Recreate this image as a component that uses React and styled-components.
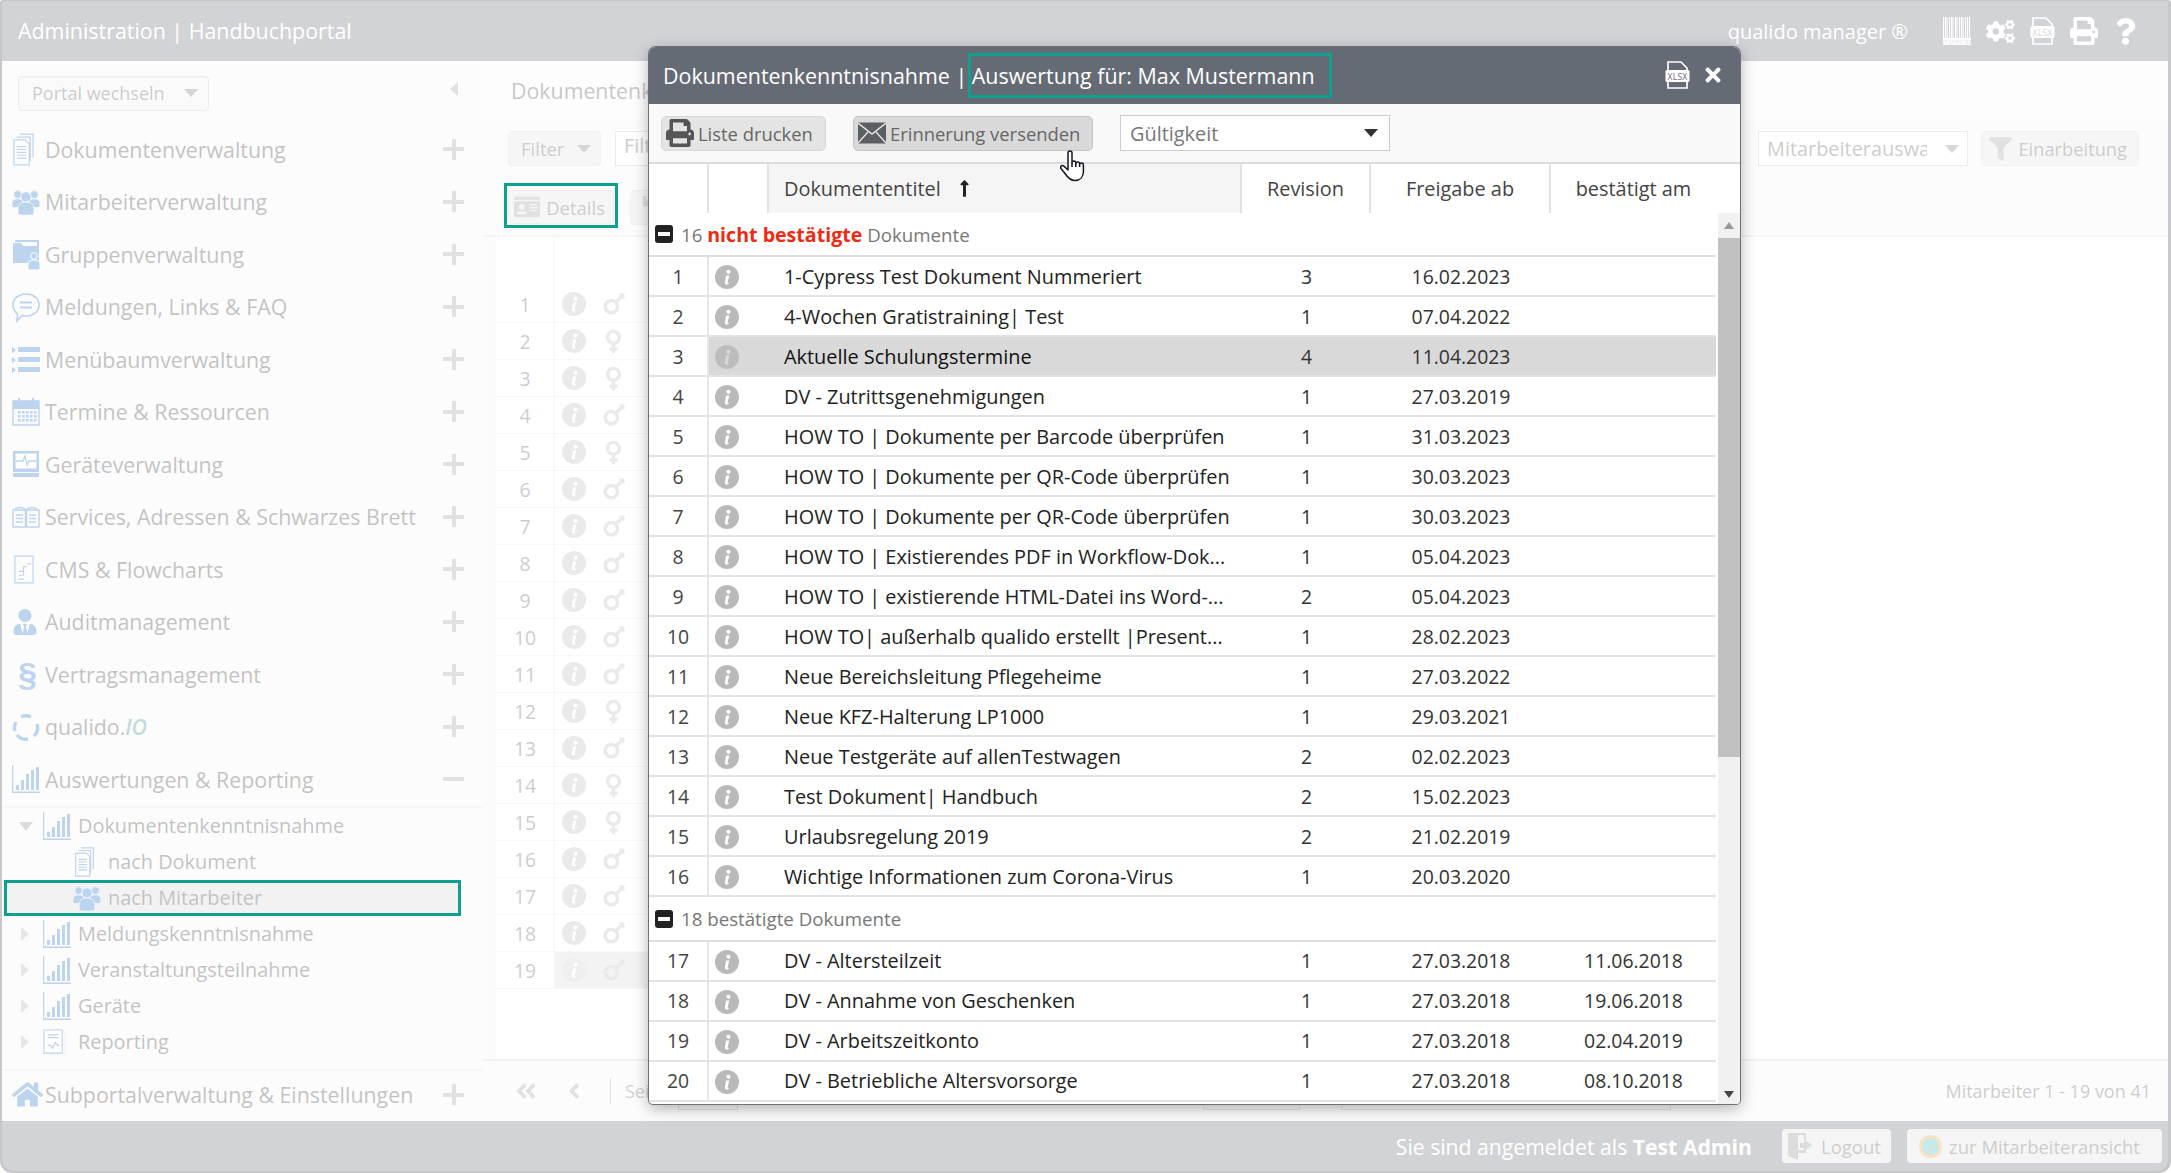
import React from "react";
import styled, { createGlobalStyle } from "styled-components";
import {
  FaUserTie, FaHome, FaCogs, FaPrint, FaQuestion, FaMars, FaVenus,
  FaAngleDoubleLeft, FaAngleLeft, FaFilter, FaUndo, FaIdCard, FaTimes, FaLongArrowAltUp,
} from "react-icons/fa";

const GlobalStyle = createGlobalStyle`
  html, body { margin: 0; padding: 0; background: #fff; }
  body { font-family: "Open Sans", "Noto Sans", sans-serif; }
  *, *::before, *::after { box-sizing: border-box; }
`;

// ---- drawn icons
const DocsIcon = () => (
  <svg viewBox="0 0 24 34" width="23" height="33" fill="none" stroke="currentColor" strokeWidth="1.3">
    <path d="M8 1h14v24M5 4h14v25" />
    <path d="M2 7h12l4 4v22H2z" fill="#fff" />
    <path d="M5 14h10M5 17h10M5 20h10M5 23h10M5 26h10" />
  </svg>
);
const PeopleIcon = ({ size = 28 }) => (
  <svg viewBox="0 0 30 28" width={size} height={size * 0.93} fill="currentColor" stroke="#f5f5f5" strokeWidth="0.800">
    <circle cx="6" cy="6" r="4.300" />
    <circle cx="24" cy="6" r="4.300" />
    <path d="M0 20v-5c0-3 2.500-4.500 6-4.500s6 1.500 6 4.500v5zM18 20v-5c0-3 2.500-4.500 6-4.500s6 1.500 6 4.500v5z" />
    <circle cx="15" cy="8.500" r="5.500" />
    <path d="M6.500 27.500V21c0-5 4-7 8.500-7s8.500 2 8.500 7v6.500c-5 1-12 1-17 0z" />
  </svg>
);
const FolderUserIcon = () => (
  <svg viewBox="0 0 28 34" width="28" height="34" fill="currentColor">
    <path d="M1 6h8l2 3h14v-5h2v22H1z" />
    <path d="M3 3h24v2H3z" />
    <circle cx="22" cy="19" r="3.4" stroke="#fff" strokeWidth="1" />
    <path d="M16 33v-6c0-3 3-4 6-4s6 1 6 4v6z" stroke="#fff" strokeWidth="1" />
  </svg>
);
const ChatIcon = () => (
  <svg viewBox="0 0 28 34" width="28" height="34" fill="none" stroke="currentColor" strokeWidth="1.6">
    <path d="M14 4c7 0 13 4 13 11s-6 11-13 11c-1.500 0-3 0-4-.5L5 31l.5-7C3 22 1 19 1 15 1 8 7 4 14 4z" />
    <path d="M8 12.500h12M8 17.500h12" strokeWidth="2" />
  </svg>
);
const ListIcon = () => (
  <svg viewBox="0 0 28 28" width="28" height="28" fill="currentColor">
    <path d="M0 2l4 3-4 3zM0 12l4 3-4 3zM0 22l4 3-4 3z" />
    <rect x="6" y="2" width="22" height="5" />
    <rect x="6" y="12" width="22" height="5" />
    <rect x="6" y="22" width="22" height="5" />
  </svg>
);
const CalendarIcon = () => (
  <svg viewBox="0 0 28 28" width="28" height="28" fill="currentColor">
    <path d="M1 3h26v24H1z" fill="none" stroke="currentColor" strokeWidth="1.4" />
    <path d="M1 3h26v8H1z" />
    <path d="M6 0h2v6H6zM20 0h2v6h-2z" />
    {[6, 10, 14, 18, 22].map((x) =>
      [13, 17, 21].map((y) => <rect key={x + "-" + y} x={x} y={y} width="2.600" height="2.600" />)
    )}
  </svg>
);
const MonitorIcon = () => (
  <svg viewBox="0 0 28 28" width="28" height="28" fill="currentColor">
    <path d="M1 1h26v21H1z" />
    <path d="M3.500 3.500h21v15h-21z" fill="#fff" />
    <path d="M4 11h7l2-5 2 9 2-4h7" fill="none" stroke="currentColor" strokeWidth="1.300" />
    <path d="M1 23h26v4H1z" />
  </svg>
);
const BookIcon = () => (
  <svg viewBox="0 0 28 22" width="28" height="22" fill="none" stroke="currentColor" strokeWidth="1.4">
    <path d="M1 4h12.500v17H1zM14.500 4H27v17H14.500z" />
    <path d="M4 9h7M4 12.500h7M4 16h7M17 9h7M17 12.500h7M17 16h7" />
    <path d="M3 3c4-2 8-2 11 1 3-3 7-3 11-1" />
  </svg>
);
const FlowIcon = () => (
  <svg viewBox="0 0 24 30" width="23" height="29" fill="none" stroke="currentColor" strokeWidth="1.2">
    <path d="M3 1h19v28H3z" />
    <path d="M7 21h5M7 17h5M7 25h5M12 21v-9h3M16 9h4" />
  </svg>
);
const ChartIcon = ({ size = 28 }) => (
  <svg viewBox="0 0 28 28" width={size} height={size} fill="currentColor">
    <path d="M0 0h1.200v26.500H28V28H0z" />
    <rect x="4" y="20" width="3" height="5" />
    <rect x="9" y="15" width="3" height="10" />
    <rect x="14" y="9" width="3" height="16" />
    <rect x="19" y="5" width="3" height="20" />
    <rect x="24" y="2" width="3" height="23" />
  </svg>
);
const ReportIcon = () => (
  <svg viewBox="0 0 26 28" width="25" height="27" fill="none" stroke="currentColor" strokeWidth="1.2">
    <path d="M4 3h19v24H4z" stroke="#d6d6d6" />
    <path d="M1 1h19v24H1z" fill="#fff" />
    <path d="M5 6h11M5 9h11M5 17h3l2 3 3-6 2 3h2" />
  </svg>
);
const CycleIcon = () => (
  <svg viewBox="0 0 28 28" width="28" height="28" fill="none" stroke="currentColor" strokeWidth="3.400">
    <path d="M9 4a11.500 11.500 0 0 1 10 0M25 11a11.500 11.500 0 0 1-3 12M16 26a11.500 11.500 0 0 1-11-4M3 18a11.500 11.500 0 0 1 1-9" />
  </svg>
);
const XlsxIcon = ({ color = "#fff" }) => (
  <svg viewBox="0 0 25 28" width="25" height="28" fill="none" stroke={color} strokeWidth="1.700">
    <path d="M3 9V1h13l6 6v2M3 21v6h19v-6" />
    <rect x="0.500" y="9" width="24" height="12" rx="1.500" fill={color} stroke="none" />
    <text x="12.500" y="18.500" textAnchor="middle" fontSize="8.500" fill="#656b75" stroke="none" fontFamily="Open Sans" letterSpacing="0.300">XLSX</text>
  </svg>
);
const BarcodeIcon = () => (
  <svg viewBox="0 0 28 28" width="28" height="28" fill="#fff">
    {[0, 2, 3.500, 6, 8, 9.500, 12, 13.500, 16, 18, 19.500, 22, 24, 26].map((x) => (
      <rect key={x} x={x} y="0" width="1.100" height="21" />
    ))}
    <rect x="0" y="21" width="28" height="7" />
    <text x="14" y="27" textAnchor="middle" fontSize="5" fill="#888" fontFamily="Open Sans">0123456789</text>
  </svg>
);
const InfoIcon = ({ color = "#b9b9b9", mark = "#fff" }) => (
  <svg viewBox="0 0 24 24" width="24" height="24">
    <circle cx="12" cy="12" r="12" fill={color} />
    <circle cx="13.500" cy="6.800" r="2.100" fill={mark} />
    <path d="M11 10.500h3.300l-1.800 7.300c0 .6.500.6 1.400.2l-.1.900c-1.700.8-4.100.9-3.900-1.200z" fill={mark} />
  </svg>
);
const MailIcon = () => (
  <svg viewBox="0 0 28 22" width="28" height="22">
    <rect width="28" height="21" y="0.500" fill="#5b5e63" />
    <path d="M0 1l14 11L28 1M0 21l10-11M28 21L18 10" fill="none" stroke="#e6e6e6" strokeWidth="1.400" />
  </svg>
);
const DoorIcon = () => (
  <svg viewBox="0 0 28 28" width="28" height="28" fill="currentColor">
    <path d="M1 1h18v9h-2V3h-6v25L1 24z" />
    <path d="M17 19v-3h-4v-5h4V7l8 6z" />
    <path d="M11 21h8v-3h-8z" />
  </svg>
);
const HandCursor = () => (
  <svg viewBox="0 0 26 32" width="26" height="32" fill="#fff" stroke="#14161c" strokeWidth="1.500" strokeLinejoin="round">
    <path d="M8 19V3a2 2 0 0 1 4 0v10a1.900 1.900 0 0 1 3.800 0v1a1.900 1.900 0 0 1 3.800 0v1a1.900 1.900 0 0 1 3.800 0v6.500C23.400 27 20 30.500 15 30.500c-4 0-7-2.500-10-7l-4-5c-1.200-1.800.8-3.700 2.600-2.600L8 20z" />
    <path d="M12 13v4M15.800 14v3M19.600 15v2" fill="none" />
  </svg>
);

const DocRow = ({ nr, doc, selected }) => (
  <Row>
    <NrCell>{nr}</NrCell>
    <RowRest $selected={selected}>
      <InfoCell>{selected ? <InfoIcon color="#bdbdbd" mark="#d9d9d9" /> : <InfoIcon />}</InfoCell>
      <TitleCell>{doc[0]}</TitleCell>
      <MidCell>{doc[1]}</MidCell>
      <DateCell>{doc[2]}</DateCell>
      <LastCell>{doc[3]}</LastCell>
    </RowRest>
  </Row>
);

export default function App() {
  const menuItems = [
    { label: "Dokumentenverwaltung", icon: <DocsIcon /> },
    { label: "Mitarbeiterverwaltung", icon: <PeopleIcon /> },
    { label: "Gruppenverwaltung", icon: <FolderUserIcon /> },
    { label: "Meldungen, Links & FAQ", icon: <ChatIcon /> },
    { label: "Menübaumverwaltung", icon: <ListIcon /> },
    { label: "Termine & Ressourcen", icon: <CalendarIcon /> },
    { label: "Geräteverwaltung", icon: <MonitorIcon /> },
    { label: "Services, Adressen & Schwarzes Brett", icon: <BookIcon /> },
    { label: "CMS & Flowcharts", icon: <FlowIcon /> },
    { label: "Auditmanagement", icon: <FaUserTie size={26} /> },
    { label: "Vertragsmanagement", icon: <Paragraph>§</Paragraph> },
    { label: <>qualido.<IoMark>IO</IoMark></>, icon: <CycleIcon /> },
  ];

  const treeItems = [
    { label: "Dokumentenkenntnisnahme", open: true, icon: <ChartIcon /> },
    { label: "nach Dokument", sub: true, icon: <DocsIcon /> },
    { label: "nach Mitarbeiter", sub: true, active: true, icon: <PeopleIcon /> },
    { label: "Meldungskenntnisnahme", closed: true, icon: <ChartIcon /> },
    { label: "Veranstaltungsteilnahme", closed: true, icon: <ChartIcon /> },
    { label: "Geräte", closed: true, icon: <ChartIcon /> },
    { label: "Reporting", closed: true, icon: <ReportIcon /> },
  ];

  const genders = "mffmfmmmmmmfmffmmmm".split("");

  const openDocs = [
    ["1-Cypress Test Dokument Nummeriert", 3, "16.02.2023"],
    ["4-Wochen Gratistraining| Test", 1, "07.04.2022"],
    ["Aktuelle Schulungstermine", 4, "11.04.2023"],
    ["DV - Zutrittsgenehmigungen", 1, "27.03.2019"],
    ["HOW TO | Dokumente per Barcode überprüfen", 1, "31.03.2023"],
    ["HOW TO | Dokumente per QR-Code überprüfen", 1, "30.03.2023"],
    ["HOW TO | Dokumente per QR-Code überprüfen", 1, "30.03.2023"],
    ["HOW TO | Existierendes PDF in Workflow-Dok...", 1, "05.04.2023"],
    ["HOW TO | existierende HTML-Datei ins Word-...", 2, "05.04.2023"],
    ["HOW TO| außerhalb qualido erstellt |Present...", 1, "28.02.2023"],
    ["Neue Bereichsleitung Pflegeheime", 1, "27.03.2022"],
    ["Neue KFZ-Halterung LP1000", 1, "29.03.2021"],
    ["Neue Testgeräte auf allenTestwagen", 2, "02.02.2023"],
    ["Test Dokument| Handbuch", 2, "15.02.2023"],
    ["Urlaubsregelung 2019", 2, "21.02.2019"],
    ["Wichtige Informationen zum Corona-Virus", 1, "20.03.2020"],
  ];

  const doneDocs = [
    ["DV - Altersteilzeit", 1, "27.03.2018", "11.06.2018"],
    ["DV - Annahme von Geschenken", 1, "27.03.2018", "19.06.2018"],
    ["DV - Arbeitszeitkonto", 1, "27.03.2018", "02.04.2019"],
    ["DV - Betriebliche Altersvorsorge", 1, "27.03.2018", "08.10.2018"],
  ];

  return (
    <>
      <GlobalStyle />
      <Page>
        <TopBar>
          <TopTitle>Administration | Handbuchportal</TopTitle>
          <TopRight>
            <ProductName>qualido manager ®</ProductName>
            <BarcodeIcon />
            <FaCogs size={29} />
            <XlsxIcon />
            <FaPrint size={28} />
            <HelpSlot><FaQuestion size={27} /></HelpSlot>
          </TopRight>
        </TopBar>

        <Main>
          <Sidebar>
            <PortalRow>
              <PortalSelect>Portal wechseln<Caret $color="#777" /></PortalSelect>
              <CollapseArrow />
            </PortalRow>
            {menuItems.map((m, i) => (
              <MenuItem key={i}>
                <MenuIcon>{m.icon}</MenuIcon>
                <MenuLabel>{m.label}</MenuLabel>
                <PlusSign />
              </MenuItem>
            ))}
            <MenuItem>
              <MenuIcon><ChartIcon /></MenuIcon>
              <MenuLabel>Auswertungen & Reporting</MenuLabel>
              <PlusSign $minus />
            </MenuItem>
            <Tree>
              {treeItems.map((t) => (
                <TreeItem key={t.label} $sub={t.sub} $active={t.active}>
                  {t.open && <TreeOpen />}
                  {t.closed && <TreeClosed />}
                  <TreeIcon>{t.icon}</TreeIcon>
                  <TreeLabel>{t.label}</TreeLabel>
                </TreeItem>
              ))}
            </Tree>
            <SidebarFooter>
              <MenuIcon><FaHome size={31} /></MenuIcon>
              <MenuLabel>Subportalverwaltung & Einstellungen</MenuLabel>
              <PlusSign />
            </SidebarFooter>
          </Sidebar>

          <Content>
            <ContentHead>Dokumentenk</ContentHead>
            <Tools>
              <FilterRow>
                <FilterLeft>
                  <GhostButton $w={93}>Filter<Caret $color="#777" /></GhostButton>
                  <GhostInput>Filter</GhostInput>
                </FilterLeft>
                <FilterRight>
                  <StaffSelect><StaffText>Mitarbeiterauswahl</StaffText><Caret $color="#777" /></StaffSelect>
                  <FunnelButton $w={158}><FaFilter size={28} color="#999" />Einarbeitung</FunnelButton>
                </FilterRight>
              </FilterRow>
              <ActionRow>
                <DetailsButton><FaIdCard size={30} color="#999" />Details</DetailsButton>
                <GhostButton $w={60}><FaUndo size={24} color="#999" /></GhostButton>
              </ActionRow>
            </Tools>
            <BackTable>
              <BackHead><BackNr /><BackRest /></BackHead>
              {genders.map((g, i) => (
                <BackRow key={i}>
                  <BackNr>{i + 1}</BackNr>
                  <BackRest $selected={i === 18}>
                    <InfoIcon color={i === 18 ? "#c9c9c9" : "#b9b9b9"} />
                    {g === "m" ? <FaMars size={28} color="#b9b9b9" /> : <FaVenus size={27} color="#b9b9b9" />}
                  </BackRest>
                </BackRow>
              ))}
            </BackTable>
            <Pager>
              <PagerIcon $ml={31}><FaAngleDoubleLeft size={24} /></PagerIcon>
              <PagerIcon $ml={24}><FaAngleLeft size={24} /></PagerIcon>
              <PagerDivider />
              <PagerLabel>Seite</PagerLabel>
              <PagerBox $w={60} $ml={12} />
              <PagerBox $w={97} $ml={465} />
              <PagerBox $w={330} $ml={41} />
              <PagerCount>Mitarbeiter 1 - 19 von 41</PagerCount>
            </Pager>
          </Content>
        </Main>

        <BottomBar>
          <LoginText>Sie sind angemeldet als <b>Test Admin</b></LoginText>
          <BottomButton $w={109}><DoorIcon />Logout</BottomButton>
          <BottomButton $w={255}><StatusDot />zur Mitarbeiteransicht</BottomButton>
        </BottomBar>

        <Overlay />

        <Modal>
          <ModalHead>
            <ModalTitle>
              Dokumentenkenntnisnahme | <TitleMark>Auswertung für: Max Mustermann</TitleMark>
            </ModalTitle>
            <ModalActions>
              <XlsxIcon />
              <FaTimes size={22} />
            </ModalActions>
          </ModalHead>
          <ModalTools>
            <ToolButton $w={165}><FaPrint size={28} color="#555" />Liste drucken</ToolButton>
            <ToolButton $w={240} $pressed><MailIcon />Erinnerung versenden</ToolButton>
            <ValidSelect>Gültigkeit<Caret $color="#333" /></ValidSelect>
          </ModalTools>
          <HeadRow>
            <HeadCell $line />
            <HeadCell $line />
            <HeadCell $line $sorted>Dokumententitel<SortArrow><FaLongArrowAltUp size={19} /></SortArrow></HeadCell>
            <HeadCell $line $center>Revision</HeadCell>
            <HeadCell $line $center>Freigabe ab</HeadCell>
            <HeadCell $center>bestätigt am</HeadCell>
          </HeadRow>
          <ModalBody>
            <RowList>
              <GroupRow>
                <GroupToggle />
                <span>16 <Alert>nicht bestätigte</Alert> Dokumente</span>
              </GroupRow>
              {openDocs.map((d, i) => (
                <DocRow key={i} nr={i + 1} doc={d} selected={i === 2} />
              ))}
              <GroupRow $tall>
                <GroupToggle />
                <span>18 bestätigte Dokumente</span>
              </GroupRow>
              {doneDocs.map((d, i) => (
                <DocRow key={i} nr={i + 17} doc={d} />
              ))}
            </RowList>
            <ScrollTrack>
              <ScrollArrow />
              <ScrollThumb />
              <ScrollArrow $down />
            </ScrollTrack>
          </ModalBody>
        </Modal>

        <PointerSlot><HandCursor /></PointerSlot>
      </Page>
    </>
  );
}

const Page = styled.div`
  position: relative;
  height: 1173px;
  overflow: hidden;
  display: flex;
  flex-direction: column;
  border-style: solid;
  border-color: #c7c8cb;
  border-width: 1px 3px 2px 2px;
  border-radius: 3px 3px 12px 12px;
  color: #333;
`;

const Overlay = styled.div`
  position: absolute;
  inset: 0;
  z-index: 10;
  background: rgba(255, 255, 255, 0.7);
`;

const TopBar = styled.header`
  flex: 0 0 60px;
  background: #656b75;
  color: #fff;
  display: flex;
  align-items: center;
  justify-content: space-between;
  padding: 0 29px 0 16px;
`;

const TopTitle = styled.div`
  font-size: 21.400px;
  padding-bottom: 2px;
`;

const TopRight = styled.div`
  display: flex;
  align-items: center;
  gap: 15px;
`;

const ProductName = styled.div`
  font-size: 20px;
  margin-right: 20px;
`;

const HelpSlot = styled.span`
  display: flex;
  margin-left: -1px;
`;

const Main = styled.div`
  flex: 1;
  display: flex;
  min-height: 0;
`;

const Sidebar = styled.aside`
  flex: 0 0 481px;
  display: flex;
  flex-direction: column;
  background: #f5f5f5;
`;

const PortalRow = styled.div`
  flex: 0 0 62px;
  display: flex;
  align-items: flex-start;
  justify-content: space-between;
  padding: 15px 25px 0 16px;
`;

const PortalSelect = styled.div`
  width: 191px;
  height: 35px;
  border: 1px solid #bbb;
  border-radius: 4px;
  background: #eee;
  display: flex;
  align-items: center;
  justify-content: space-between;
  padding: 0 10px 2px 13px;
  font-size: 18px;
  color: #555;
`;

const Caret = styled.span`
  width: 0;
  height: 0;
  border-style: solid;
  border-width: 8px 7px 0 7px;
  border-color: ${(p) => p.$color} transparent transparent transparent;
`;

const CollapseArrow = styled.span`
  margin-top: 6px;
  width: 0;
  height: 0;
  border-style: solid;
  border-width: 7px 8px 7px 0;
  border-color: transparent #999 transparent transparent;
`;

const MenuItem = styled.div`
  flex: 0 0 52.500px;
  display: flex;
  align-items: center;
  padding: 0 19px 0 10px;
`;

const SidebarFooter = styled(MenuItem)`
  flex: 0 0 52px;
  border-top: 2px solid #e2e2e2;
  padding-bottom: 3px;
`;

const MenuIcon = styled.span`
  flex: 0 0 33px;
  width: 33px;
  display: flex;
  align-items: center;
  justify-content: flex-start;
  color: #236fc6;
`;

const MenuLabel = styled.span`
  flex: 1;
  font-size: 21.350px;
  white-space: nowrap;
  color: #333;
`;

const IoMark = styled.i`
  color: #26867f;
  font-weight: 600;
`;

const Paragraph = styled.b`
  font-size: 34px;
  line-height: 1;
  margin-left: 6px;
  font-family: "Liberation Sans", sans-serif;
`;

const PlusSign = styled.span`
  position: relative;
  flex: 0 0 21px;
  height: 21px;
  &::before {
    content: "";
    position: absolute;
    left: 0;
    right: 0;
    top: 8.500px;
    height: 4px;
    background: #9b9b9b;
  }
  &::after {
    content: "";
    display: ${(p) => (p.$minus ? "none" : "block")};
    position: absolute;
    top: 0;
    bottom: 0;
    left: 8.500px;
    width: 4px;
    background: #9b9b9b;
  }
`;

const Tree = styled.div`
  flex: 1;
  border-top: 2px solid #e2e2e2;
  margin-top: 0.500px;
`;

const TreeItem = styled.div`
  position: relative;
  height: 36px;
  display: flex;
  align-items: center;
  margin: ${(p) => (p.$active ? "0 22px 0 2px" : "0")};
  padding-left: ${(p) => (p.$active ? "69px" : p.$sub ? "71px" : "41px")};
  background: ${(p) => (p.$active ? "#d4d4d4" : "transparent")};
  ${(p) =>
    p.$active &&
    `&::after {
      content: "";
      position: absolute;
      z-index: 20;
      inset: 0;
      border: 3px solid #0da08c;
    }`}
`;

const TreeOpen = styled.span`
  position: absolute;
  left: 17px;
  top: 14px;
  width: 0;
  height: 0;
  border-style: solid;
  border-width: 9px 7px 0 7px;
  border-color: #888 transparent transparent transparent;
`;

const TreeClosed = styled.span`
  position: absolute;
  left: 19px;
  top: 11px;
  width: 0;
  height: 0;
  border-style: solid;
  border-width: 7px 0 7px 8px;
  border-color: transparent transparent transparent #aaa;
`;

const TreeIcon = styled.span`
  flex: 0 0 35px;
  display: flex;
  align-items: center;
  color: #236fc6;
  & > svg {
    max-height: 30px;
  }
`;

const TreeLabel = styled.span`
  font-size: 19.900px;
  padding-bottom: 2px;
  color: #333;
`;

const Content = styled.main`
  flex: 1;
  min-width: 0;
  display: flex;
  flex-direction: column;
  padding-left: 13px;
  background: #f0f0f0;
`;

const ContentHead = styled.div`
  flex: 0 0 57px;
  margin-left: -13px;
  padding: 15px 0 0 28px;
  background: #f7f7f7;
  font-size: 21.350px;
  color: #444;
  white-space: nowrap;
`;

const Tools = styled.div`
  flex: 0 0 119px;
  margin-left: -13px;
  padding-left: 25px;
  background: #f5f5f5;
  border-bottom: 2px solid #dcdcdc;
`;

const FilterRow = styled.div`
  display: flex;
  justify-content: space-between;
  padding: 13px 29px 0 0;
`;

const FilterLeft = styled.div`
  display: flex;
  gap: 14px;
`;

const FilterRight = styled.div`
  display: flex;
  gap: 13px;
`;

const GhostButton = styled.div`
  width: ${(p) => p.$w}px;
  height: 35px;
  border: 1px solid #ccc;
  border-radius: 4px;
  background: #e0e0e0;
  color: #555;
  font-size: 18.500px;
  display: flex;
  align-items: center;
  justify-content: space-between;
  padding: 0 9px 0 12px;
  gap: 6px;
`;

const FunnelButton = styled(GhostButton)`
  font-size: 18.300px;
  padding: 0 11px 0 7px;
`;

const GhostInput = styled.div`
  width: 240px;
  height: 35px;
  border: 1px solid #bbb;
  background: #fff;
  color: #555;
  font-size: 19.900px;
  padding: 0 8px;
`;

const StaffSelect = styled(GhostInput)`
  width: 210px;
  display: flex;
  align-items: center;
  justify-content: space-between;
`;

const StaffText = styled.span`
  width: 160px;
  overflow: hidden;
  white-space: nowrap;
`;

const ActionRow = styled.div`
  display: flex;
  gap: 16px;
  margin-top: 24px;
`;

const DetailsButton = styled(GhostButton)`
  position: relative;
  width: 106px;
  height: 34px;
  padding: 0 8px 0 5px;
  &::after {
    content: "";
    position: absolute;
    z-index: 20;
    top: -8px;
    bottom: -5px;
    left: -5px;
    right: -5px;
    border: 3px solid #0da08c;
  }
`;

const BackTable = styled.div`
  flex: 1;
  background: #fff;
  margin-right: -13px;
  padding-right: 0;
`;

const BackHead = styled.div`
  height: 49px;
  display: flex;
`;

const BackRow = styled.div`
  height: 37px;
  width: 1000px;
  display: flex;
  border-bottom: 1px solid #e6e6e6;
`;

const BackNr = styled.div`
  flex: 0 0 59px;
  display: flex;
  align-items: center;
  justify-content: center;
  font-size: 19.400px;
  color: #555;
  border-right: 1px solid #e2e2e2;
`;

const BackRest = styled.div`
  flex: 1;
  display: flex;
  align-items: center;
  gap: 14px;
  padding-left: 7px;
  background: ${(p) => (p.$selected ? "#d7d7d7" : "transparent")};
`;

const Pager = styled.div`
  flex: 0 0 62px;
  margin-left: -13px;
  margin-right: 0;
  border-top: 2px solid #d6d6d6;
  background: #f5f5f5;
  display: flex;
  align-items: center;
  padding-right: 17px;
  position: relative;
`;

const PagerIcon = styled.span`
  display: flex;
  margin-left: ${(p) => p.$ml}px;
  color: #999;
`;

const PagerDivider = styled.span`
  width: 1px;
  height: 26px;
  margin-left: 24px;
  background: #999;
`;

const PagerLabel = styled.span`
  margin-left: 14px;
  font-size: 18px;
  color: #666;
`;

const PagerBox = styled.span`
  height: 36px;
  flex: 0 0 ${(p) => p.$w}px;
  margin-left: ${(p) => p.$ml}px;
  margin-top: 1px;
  border: 1px solid #aaa;
  background: #eee;
`;

const PagerCount = styled.span`
  margin-left: auto;
  font-size: 18px;
  color: #555;
`;

const BottomBar = styled.footer`
  flex: 0 0 50px;
  background: #656b75;
  display: flex;
  align-items: center;
  justify-content: flex-end;
  padding: 0 6px 0 0;
  gap: 16px;
`;

const LoginText = styled.div`
  color: #fff;
  font-size: 21.200px;
  margin-right: 14px;
`;

const BottomButton = styled.div`
  flex: 0 0 ${(p) => p.$w}px;
  height: 34px;
  border-radius: 4px;
  background: #dcdcdc;
  color: #555;
  font-size: 18.500px;
  display: flex;
  align-items: center;
  gap: 6px;
  padding: 0 5px;
  & svg {
    color: #8a8a8a;
  }
`;

const StatusDot = styled.span`
  width: 23px;
  height: 23px;
  margin-left: 7px;
  margin-right: 1px;
  border-radius: 50%;
  background: #44b5b5;
  border: 3px solid #ee9d3f;
`;

const Modal = styled.section`
  position: absolute;
  z-index: 30;
  left: 647px;
  top: 46px;
  width: 1091px;
  height: 1057px;
  background: #fff;
  border-radius: 7px 7px 4px 4px;
  overflow: hidden;
  display: flex;
  flex-direction: column;
  box-shadow: 0 0 0 1px #6b7079, 0 4px 16px rgba(0, 0, 0, 0.32);
`;

const ModalHead = styled.div`
  flex: 0 0 57px;
  background: #656b75;
  color: #fff;
  display: flex;
  align-items: center;
  justify-content: space-between;
  padding: 0 16px 1px 14px;
`;

const ModalTitle = styled.div`
  font-size: 21.450px;
  font-weight: 500;
  white-space: nowrap;
`;

const TitleMark = styled.span`
  position: relative;
  margin-left: -1px;
  &::after {
    content: "";
    position: absolute;
    top: -8px;
    bottom: -8px;
    left: -4px;
    right: -17px;
    border: 3px solid #0da08c;
  }
`;

const ModalActions = styled.div`
  display: flex;
  align-items: center;
  gap: 12px;
`;

const ModalTools = styled.div`
  flex: 0 0 60px;
  background: #f9f9f9;
  border-bottom: 2px solid #dcdcdc;
  display: flex;
  align-items: center;
  padding: 0 0 0 12px;
`;

const ToolButton = styled.div`
  flex: 0 0 ${(p) => p.$w}px;
  height: 35px;
  padding: 0 0 0 4px;
  margin-right: 27px;
  display: flex;
  align-items: center;
  gap: 4px;
  border-radius: 5px;
  border: 1px solid ${(p) => (p.$pressed ? "#c4c4c4" : "#d8d8d8")};
  background: ${(p) => (p.$pressed ? "#d9d9d9" : "#e4e4e4")};
  color: #666;
  font-size: 18.400px;
  white-space: nowrap;
`;

const ValidSelect = styled.div`
  width: 270px;
  height: 36px;
  border: 1px solid #ccc;
  background: #fff;
  display: flex;
  align-items: center;
  justify-content: space-between;
  padding: 0 11px 0 9px;
  font-size: 19.900px;
  color: #777;
`;

const gridColumns = "60px 60px 473px 129px 180px 1fr";

const HeadRow = styled.div`
  flex: 0 0 49px;
  display: grid;
  grid-template-columns: ${gridColumns};
  padding-right: 24px;
`;

const HeadCell = styled.div`
  display: flex;
  align-items: center;
  justify-content: ${(p) => (p.$center ? "center" : "flex-start")};
  padding-left: ${(p) => (p.$center ? "0" : "15px")};
  font-size: 19.900px;
  color: #444;
  border-right: ${(p) => (p.$line ? "2px solid #e2e2e2" : "none")};
  background: ${(p) => (p.$sorted ? "#f5f5f5" : "transparent")};
`;

const SortArrow = styled.span`
  display: flex;
  margin-left: 14px;
  color: #222;
`;

const ModalBody = styled.div`
  flex: 1;
  min-height: 0;
  display: flex;
`;

const RowList = styled.div`
  flex: 1;
  min-width: 0;
  overflow: hidden;
  padding-right: 2px;
`;

const GroupRow = styled.div`
  height: ${(p) => (p.$tall ? "44.500px" : "44px")};
  padding-top: ${(p) => (p.$tall ? "1px" : "0")};
  display: flex;
  align-items: center;
  gap: 6px;
  padding-left: 6px;
  border-bottom: 2px solid #dfdfdf;
  font-size: 18.700px;
  color: #777;
  white-space: pre;
`;

const GroupToggle = styled.span`
  position: relative;
  width: 18px;
  height: 18px;
  margin-right: 2px;
  border-radius: 3px;
  background: #222;
  &::after {
    content: "";
    position: absolute;
    left: 3px;
    right: 3px;
    top: 7px;
    height: 4px;
    background: #fff;
  }
`;

const Alert = styled.b`
  color: #ee2b12;
  font-weight: 700;
  font-size: 19.600px;
`;

const Row = styled.div`
  height: 40px;
  display: grid;
  grid-template-columns: 60px 1fr;
  border-bottom: 2px solid #e3e3e3;
  font-size: 19.400px;
  color: #222;
`;

const NrCell = styled.div`
  display: flex;
  align-items: center;
  justify-content: center;
  border-right: 2px solid #e6e6e6;
  color: #444;
`;

const RowRest = styled.div`
  display: grid;
  grid-template-columns: 60px 473px 129px 180px 1fr;
  background: ${(p) => (p.$selected ? "#d9d9d9" : "transparent")};
  color: ${(p) => (p.$selected ? "#111" : "inherit")};
`;

const InfoCell = styled.div`
  display: flex;
  align-items: center;
  padding-left: 6px;
  padding-top: 2px;
`;

const TitleCell = styled.div`
  display: flex;
  align-items: center;
  padding-left: 15px;
  font-size: 19.900px;
  white-space: nowrap;
`;

const MidCell = styled.div`
  display: flex;
  align-items: center;
  justify-content: center;
  color: #333;
`;

const DateCell = styled(MidCell)``;
const LastCell = styled(MidCell)``;

const ScrollTrack = styled.div`
  flex: 0 0 22px;
  background: #f1f1f1;
  display: flex;
  flex-direction: column;
`;

const ScrollArrow = styled.div`
  flex: 0 0 ${(p) => (p.$down ? "10px" : "25px")};
  margin-top: ${(p) => (p.$down ? "auto" : "0")};
  margin-bottom: ${(p) => (p.$down ? "5px" : "0")};
  display: flex;
  justify-content: center;
  align-items: center;
  &::before {
    content: "";
    width: 0;
    height: 0;
    border-style: solid;
    border-width: ${(p) => (p.$down ? "7px 5px 0 5px" : "0 5px 7px 5px")};
    border-color: ${(p) =>
      p.$down
        ? "#444 transparent transparent transparent"
        : "transparent transparent #999 transparent"};
  }
`;

const ScrollThumb = styled.div`
  flex: 0 0 519px;
  background: #c1c1c1;
`;

const PointerSlot = styled.div`
  position: absolute;
  z-index: 40;
  left: 1058px;
  top: 149px;
`;
